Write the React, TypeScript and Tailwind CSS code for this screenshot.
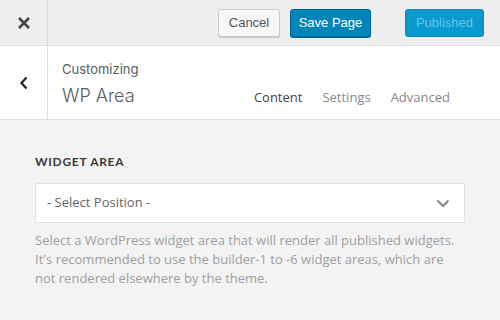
import React from "react";

export default function App() {
  return (
    <div className="w-[500px] h-[320px] bg-[#f3f3f3] overflow-hidden flex flex-col" style={{ fontFamily: "'Open Sans', sans-serif" }}>
      {/* Top bar */}
      <div className="h-[46px] flex bg-[#eeeeee] border-b border-[#dddddd] shrink-0">
        <div className="w-[48px] border-r border-[#dddddd] flex items-center justify-center">
          <svg width="14" height="14" viewBox="0 0 14 14">
            <path d="M2 2 L12 12 M12 2 L2 12" stroke="#444" strokeWidth="2.6" strokeLinecap="butt" />
          </svg>
        </div>
        <div className="flex-1 flex items-center font-['Liberation_Sans',Arial,sans-serif] text-[13px]">
          <div className="ml-[170px] w-[62px] h-[28px] flex items-center justify-center rounded-[3px] border border-[#cccccc] bg-[#f7f7f7] text-[#555] shadow-[0_1px_0_#ccc]">
            Cancel
          </div>
          <div className="ml-[10px] w-[81px] h-[28px] flex items-center justify-center rounded-[3px] border border-[#006799] bg-[#0085ba] text-white shadow-[0_1px_0_#006799]">
            Save Page
          </div>
          <div className="ml-[34px] w-[79px] h-[28px] flex items-center justify-center rounded-[3px] border border-[#0888bb] bg-[#0a99cf] text-[#66c4e6]">
            Published
          </div>
        </div>
      </div>
      {/* Section header */}
      <div className="h-[74px] flex bg-white border-b border-[#dddddd] shrink-0">
        <div className="w-[48px] border-r border-[#dddddd] flex items-center justify-center">
          <svg width="10" height="14" viewBox="0 0 10 14">
            <path d="M7.5 1.5 L2.5 7 L7.5 12.5" stroke="#222" strokeWidth="2.2" fill="none" />
          </svg>
        </div>
        <div className="flex-1 flex items-end justify-between pl-[14px] pr-[50px] pb-[11px]">
          <div className="flex flex-col font-['Inter',sans-serif]">
            <span className="text-[13px] text-[#555d66] leading-[16px]">Customizing</span>
            <span className="text-[18px] font-light text-[#555d66] leading-[24px] mt-[7px]">WP Area</span>
          </div>
          <div className="flex gap-[20px] text-[13px] leading-[18px] pb-[2px]">
            <span className="text-[#444]">Content</span>
            <span className="text-[#888]">Settings</span>
            <span className="text-[#888]">Advanced</span>
          </div>
        </div>
      </div>
      {/* Content */}
      <div className="px-[35px] pt-[34px]">
        <div className="text-[12px] font-bold text-[#3a3a3a] tracking-[0.7px] font-['Lato',sans-serif] leading-[16px]">WIDGET AREA</div>
        <div className="mt-[13px] h-[40px] bg-white border border-[#e2e2e2] flex items-center justify-between pl-[11px] pr-[14px]">
          <span className="text-[13px] text-[#666]">- Select Position -</span>
          <svg width="14" height="9" viewBox="0 0 14 9">
            <path d="M1.5 1.5 L7 7 L12.5 1.5" stroke="#888" strokeWidth="2" fill="none" />
          </svg>
        </div>
        <p className="mt-[8px] text-[13px] leading-[19px] text-[#a0a0a0]">
          Select a WordPress widget area that will render all published widgets. It's recommended to use the builder-1 to -6 widget areas, which are not rendered elsewhere by the theme.
        </p>
      </div>
    </div>
  );
}
